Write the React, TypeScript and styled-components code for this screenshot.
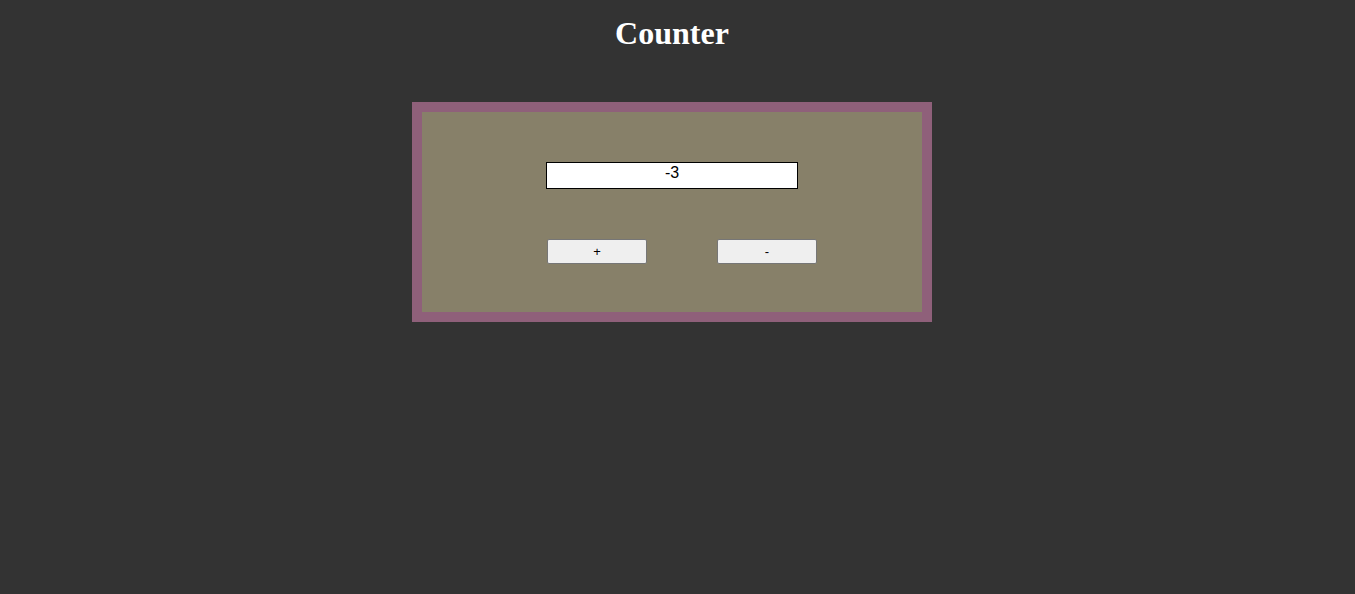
import React, { useState } from 'react';
import styled, { createGlobalStyle } from 'styled-components';

const GlobalStyle = createGlobalStyle`
  html, body {
    margin: 0;
    padding: 0;
    background: #333333;
  }
  body {
    font-family: "Liberation Serif", "Times New Roman", serif;
  }
`;

const Page = styled.div`
  display: flex;
  flex-direction: column;
  align-items: center;
  min-height: 594px;
  padding-right: 11px;
`;

const Title = styled.h1`
  margin: 15px 0 0;
  height: 37px;
  font-size: 32px;
  font-weight: bold;
  line-height: 37px;
  color: #ffffff;
`;

const Panel = styled.div`
  margin-top: 50px;
  width: 500px;
  height: 200px;
  border: 10px solid #8f607a;
  background: #878069;
  display: flex;
  flex-direction: column;
  align-items: center;
`;

const CountField = styled.input`
  box-sizing: border-box;
  margin-top: 50px;
  width: 252px;
  height: 27px;
  padding: 0 4px 6px;
  border: 1px solid #000000;
  background: #ffffff;
  color: #000000;
  font-family: "Liberation Sans", Arial, sans-serif;
  font-size: 16px;
  text-align: center;
  outline: none;
`;

const ButtonRow = styled.div`
  display: flex;
  gap: 70px;
  margin-top: 50px;
  margin-left: 20px;
`;

const CountButton = styled.button`
  box-sizing: border-box;
  width: 100px;
  height: 25px;
  border: 1px solid #767676;
  border-radius: 2px;
  background: #efefef;
  color: #000000;
  font-family: "Liberation Sans", Arial, sans-serif;
  font-size: 13px;
  cursor: pointer;
`;

function App() {
  const [count, setCount] = useState(-3);

  return (
    <Page>
      <GlobalStyle />
      <Title>Counter</Title>
      <Panel>
        <CountField type="text" value={count} readOnly />
        <ButtonRow>
          <CountButton onClick={() => setCount(count + 1)}>+</CountButton>
          <CountButton onClick={() => setCount(count - 1)}>-</CountButton>
        </ButtonRow>
      </Panel>
    </Page>
  );
}

export default App;
